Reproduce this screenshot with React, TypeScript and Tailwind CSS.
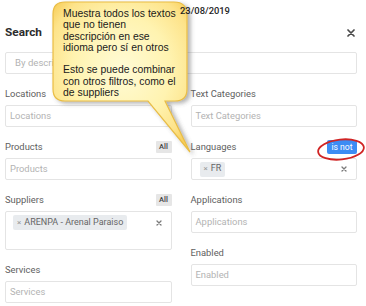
import React from "react";

const font = { fontFamily: "Roboto, 'Liberation Sans', Arial, sans-serif" };

function ClearX({ className = "" }: { className?: string }) {
  return (
    <svg width="6" height="6" viewBox="0 0 6 6" className={className}>
      <path d="M1 1 L5 5 M5 1 L1 5" stroke="#7a7a7a" strokeWidth="1.3" strokeLinecap="round" />
    </svg>
  );
}

function Label({ text, right }: { text: string; right?: React.ReactNode }) {
  return (
    <div className="flex h-[14px] items-center justify-between">
      <span className="text-[9.4px] leading-[14px] text-[#606060]">{text}</span>
      {right}
    </div>
  );
}

function Input({ placeholder }: { placeholder: string }) {
  return (
    <div className="mt-[4px] flex h-[22px] items-center rounded-[2px] border border-[#e4e4e4] bg-white px-[4px]">
      <span className="text-[9.4px] text-[#b3b3b3]">{placeholder}</span>
    </div>
  );
}

function AllBadge() {
  return (
    <span className="flex h-[12px] w-[16px] items-center justify-center rounded-[1px] bg-[#e6e6e6] text-[7.5px] font-medium text-[#444]">
      All
    </span>
  );
}

function Chip({ text }: { text: string }) {
  return (
    <span className="flex h-[15px] items-center gap-[3px] rounded-[2px] bg-[#e8ebee] px-[4px] text-[9px] text-[#666]">
      <span className="text-[8px] text-[#999]">×</span>
      {text}
    </span>
  );
}

const calloutLines = [
  "Muestra todos los textos",
  "que no tienen",
  "descripción en ese",
  "idioma pero sí en otros",
  "",
  "Esto se puede combinar",
  "con otros filtros, como el",
  "de suppliers",
];

export default function App() {
  return (
    <div className="relative h-[306px] w-[366px] overflow-hidden bg-white" style={font}>
      <div className="h-[20px]" />

      <div className="pl-[5px] pr-[9px]">
        <div className="flex h-[26px] items-center justify-between">
          <span className="text-[11.8px] font-bold text-[#2c2c2c]">Search</span>
          <svg width="8" height="8" viewBox="0 0 8 8" className="mr-[2px]">
            <path d="M1 1 L7 7 M7 1 L1 7" stroke="#4a4a4a" strokeWidth="1.7" strokeLinecap="round" />
          </svg>
        </div>

        <div className="mt-[6px] flex h-[22px] items-center rounded-[2px] border border-[#e4e4e4] px-[9px]">
          <span className="text-[9.6px] text-[#b3b3b3]">By description</span>
        </div>

        <div className="mt-[13px] grid grid-cols-2 gap-x-[19px]">
          <div className="flex flex-col">
            <div className="mb-[13px]">
              <Label text="Locations" />
              <Input placeholder="Locations" />
            </div>
            <div className="mb-[13px]">
              <Label text="Products" right={<AllBadge />} />
              <Input placeholder="Products" />
            </div>
            <div className="mb-[13px]">
              <Label text="Suppliers" right={<AllBadge />} />
              <div className="mt-[4px] flex h-[39px] items-start justify-between rounded-[2px] border border-[#e4e4e4] pl-[7px] pr-[9px] pt-[3px]">
                <Chip text="ARENPA - Arenal Paraiso" />
                <ClearX className="mt-[5px]" />
              </div>
            </div>
            <div>
              <Label text="Services" />
              <Input placeholder="Services" />
            </div>
          </div>

          <div className="flex flex-col">
            <div className="mb-[13px]">
              <Label text="Text Categories" />
              <Input placeholder="Text Categories" />
            </div>
            <div className="mb-[13px]">
              <Label
                text="Languages"
                right={
                  <span className="flex h-[14px] w-[30px] items-center justify-center rounded-[2px] bg-[#3c8cf4] text-[8.6px] text-white">
                    is not
                  </span>
                }
              />
              <div className="mt-[4px] flex h-[22px] items-center justify-between rounded-[2px] border border-[#e4e4e4] pl-[8px] pr-[9px]">
                <Chip text="FR" />
                <ClearX />
              </div>
            </div>
            <div className="mb-[13px]">
              <Label text="Applications" />
              <Input placeholder="Applications" />
            </div>
            <div>
              <Label text="Enabled" />
              <Input placeholder="Enabled" />
            </div>
          </div>
        </div>
      </div>

      {/* red hand-drawn ellipse */}
      <svg className="pointer-events-none absolute left-0 top-0" width="366" height="306" viewBox="0 0 366 306">
        <ellipse cx="341" cy="149.5" rx="23" ry="10" fill="none" stroke="#d02424" strokeWidth="1.8" transform="rotate(-6 341 149.5)" />
      </svg>

      {/* callout */}
      <svg className="pointer-events-none absolute left-0 top-0" width="366" height="306" viewBox="0 0 366 306">
        <defs>
          <radialGradient id="cg" cx="50%" cy="45%" r="65%">
            <stop offset="0%" stopColor="#fffbd6" />
            <stop offset="55%" stopColor="#fff3b0" />
            <stop offset="85%" stopColor="#fde38a" />
            <stop offset="100%" stopColor="#f8cf5c" />
          </radialGradient>
          <filter id="sh" x="-20%" y="-20%" width="150%" height="150%">
            <feDropShadow dx="3" dy="2" stdDeviation="2" floodColor="#555" floodOpacity="0.45" />
          </filter>
        </defs>
        <path
          d="M65 2 H174 Q187 2 187 15 V89 Q187 101 175 101 H165 L190 152 L148 101 H65 Q53 101 53 89 V14 Q53 2 65 2 Z"
          fill="url(#cg)"
          stroke="#e9bd45"
          strokeWidth="1.2"
          filter="url(#sh)"
        />
      </svg>
      <div
        className="pointer-events-none absolute left-[63px] top-[8px] flex flex-col text-[10.4px] leading-[11.3px] text-[#1a1a1a]"
        style={{ fontFamily: "'Liberation Sans', Arial, sans-serif" }}
      >
        {calloutLines.map((l, i) =>
          l ? (
            <div key={i} className="h-[11.3px] whitespace-nowrap">
              {l}
            </div>
          ) : (
            <div key={i} className="h-[11.3px]" />
          )
        )}
      </div>

      {/* background date, shown over the callout edge */}
      <div className="absolute left-[180px] top-[5px] text-[9.4px] leading-[12px] font-medium text-[#1e1e1e]">
        23/08/2019
      </div>
    </div>
  );
}
